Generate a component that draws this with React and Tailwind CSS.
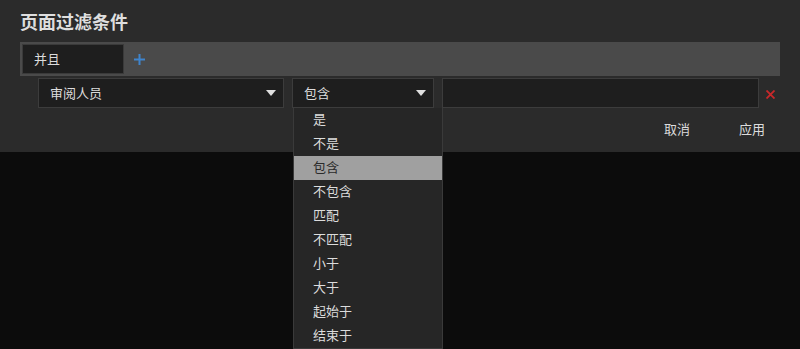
import React from "react";

const options = ["是", "不是", "包含", "不包含", "匹配", "不匹配", "小于", "大于", "起始于", "结束于"];

function Arrow() {
  return (
    <svg width="10" height="6" viewBox="0 0 10 6" className="block">
      <path d="M0 0 L10 0 L5 6 Z" fill="#e0e0e0" />
    </svg>
  );
}

export default function App() {
  return (
    <div
      className="w-[800px] h-[349px] bg-[#0c0c0c] relative overflow-hidden text-[13px] text-[#dcdcdc]"
      style={{ fontFamily: '"Noto Sans CJK SC", "Noto Sans", sans-serif' }}
    >
      <div className="bg-[#2b2b2b] h-[152px] px-5 pt-[9px]">
        <div className="text-[18px] font-bold leading-[24px] text-[#dedede]">页面过滤条件</div>
        <div className="mt-[9px] h-[34px] bg-[#4a4a4a] p-[2px] flex items-center">
          <div className="w-[102px] h-[30px] bg-[#1e1e1e] border border-[#3a3a3a] flex items-center pl-[11px] pb-[1px]">并且</div>
          <svg width="11" height="11" viewBox="0 0 11 11" className="ml-[10px] mt-[1px]">
            <path d="M5.5 0 V11 M0 5.5 H11" stroke="#3f84cc" strokeWidth="2" />
          </svg>
        </div>
        <div className="mt-[2px] pl-[18px] flex items-center">
          <div className="w-[246px] h-[30px] bg-[#1e1e1e] border border-[#3c3c3c] flex items-center justify-between pl-[11px] pr-[7px]">
            <span className="-mt-[1px]">审阅人员</span>
            <Arrow />
          </div>
          <div className="ml-[8px] w-[142px] h-[30px] bg-[#1e1e1e] border border-[#3c3c3c] flex items-center justify-between pl-[11px] pr-[7px]">
            <span className="-mt-[1px]">包含</span>
            <Arrow />
          </div>
          <div className="ml-[8px] w-[317px] h-[30px] bg-[#1e1e1e] border border-[#3c3c3c]" />
          <svg width="9" height="9" viewBox="0 0 9 9" className="ml-[7px] mt-[2px]">
            <path d="M0.5 0.5 L8.5 8.5 M8.5 0.5 L0.5 8.5" stroke="#c8282a" strokeWidth="1.8" />
          </svg>
        </div>
        <div className="flex justify-end mt-[11px] pr-[15px] gap-[49px] leading-[20px]">
          <span>取消</span>
          <span>应用</span>
        </div>
      </div>
      <div className="absolute left-[293px] top-[108px] w-[150px] bg-[#262626] border-x border-b border-[#3a3a3a]">
        {options.map((o) => (
          <div
            key={o}
            className={
              "h-[24px] flex items-center pl-[19px] pb-[2px] " +
              (o === "包含" ? "bg-[#a0a0a0] text-[#2a2a2a]" : "")
            }
          >
            {o}
          </div>
        ))}
      </div>
    </div>
  );
}
